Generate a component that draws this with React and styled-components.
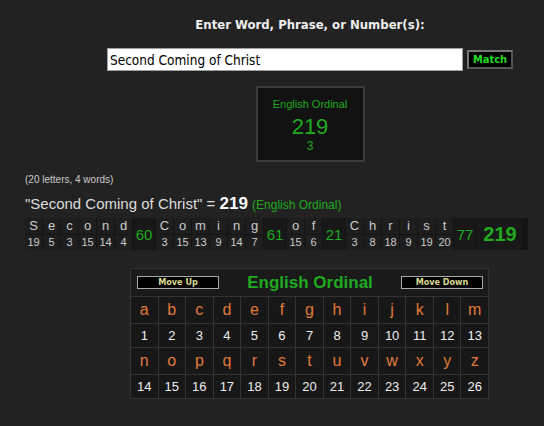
import React from 'react';
import styled, { createGlobalStyle } from 'styled-components';

const colors = {
  page: '#222222',
  green: '#1faa1f',
  bright: '#22dd22',
  orange: '#e07a3a',
  text: '#dddddd',
};

const GlobalStyle = createGlobalStyle`
  body {
    margin: 0;
    background: ${colors.page};
    font-family: "Liberation Sans", Arial, sans-serif;
  }
`;

const Page = styled.div`
  padding-top: 17px;
  width: 544px;
  height: 426px;
  overflow: hidden;
`;

const Centered = styled.div`
  margin-left: 76px;
  width: 468px;
  display: flex;
  flex-direction: column;
  align-items: center;
`;

const Heading = styled.div`
  font-family: "DejaVu Sans Condensed", "DejaVu Sans", sans-serif;
  font-weight: bold;
  font-size: 13px;
  line-height: 15px;
  color: #eeeeee;
`;

const InputRow = styled.div`
  display: flex;
  align-items: center;
  gap: 4px;
  margin-top: 16px;
`;

const TextInput = styled.input`
  box-sizing: border-box;
  width: 356px;
  height: 23px;
  border: 1px solid #a0a0a0;
  background: #ffffff;
  padding: 0 2px;
  font-family: "DejaVu Sans Condensed", "DejaVu Sans", sans-serif;
  font-size: 13.5px;
  color: #000;
  outline: none;
`;

const MatchButton = styled.button`
  box-sizing: border-box;
  width: 46px;
  height: 19px;
  padding: 0;
  background: #000;
  border: 2px solid #555;
  border-top-color: #777;
  border-left-color: #777;
  color: ${colors.bright};
  font-family: "DejaVu Sans Condensed", "DejaVu Sans", sans-serif;
  font-weight: bold;
  font-size: 11px;
`;

const ResultBox = styled.div`
  box-sizing: border-box;
  margin-top: 15px;
  width: 109px;
  height: 76px;
  border: 2px solid #3c3c3c;
  background: #121212;
  color: ${colors.green};
  text-align: center;
  padding-top: 10px;
`;

const BoxLabel = styled.div`
  font-size: 11px;
  line-height: 13px;
`;

const BoxValue = styled.div`
  font-size: 22px;
  line-height: 26px;
  margin-top: 3px;
`;

const BoxCount = styled.div`
  font-size: 12px;
  line-height: 12px;
`;

const Results = styled.div`
  margin-left: 25px;
  margin-top: 12px;
`;

const Counts = styled.div`
  font-size: 10px;
  line-height: 12px;
  color: #cccccc;
`;

const Equation = styled.div`
  margin-top: 9px;
  font-size: 15px;
  line-height: 18px;
  color: ${colors.text};
  white-space: nowrap;
`;

const Total = styled.b`
  font-size: 17px;
  color: #ffffff;
`;

const CipherName = styled.span`
  font-size: 12px;
  color: ${colors.green};
`;

const Breakdown = styled.div`
  display: flex;
  gap: 1px;
  margin-top: 4px;
  width: 503px;
  height: 32px;
  background: #141414;
`;

const LetterCol = styled.div`
  display: flex;
  flex-direction: column;
  gap: 1px;
  width: 17px;
`;

const LetterCell = styled.div`
  flex: 1;
  background: #1e1e1e;
  color: #cccccc;
  text-align: center;
  font-size: ${({ $small }) => ($small ? '11px' : '13px')};
  line-height: 15px;
`;

const SumCell = styled.div`
  width: ${({ $big }) => ($big ? '46px' : '22px')};
  display: flex;
  align-items: center;
  justify-content: center;
  background: #181818;
  color: ${colors.green};
  font-size: ${({ $big }) => ($big ? '20px' : '15px')};
  font-weight: ${({ $big }) => ($big ? 'bold' : 'normal')};
`;

const Chart = styled.div`
  box-sizing: border-box;
  margin: 18px 0 0 130px;
  width: 359px;
  border: 1px solid #333;
  background: #1a1a1a;
`;

const ChartHeader = styled.div`
  display: flex;
  align-items: center;
  justify-content: space-between;
  height: 27px;
  padding: 0 5px 0 6px;
  border-bottom: 1px solid #333;
`;

const MoveButton = styled.button`
  box-sizing: border-box;
  width: 82px;
  height: 13px;
  padding: 0;
  background: #000;
  border: 1px solid #aaa;
  color: #d8d890;
  font-family: "DejaVu Sans Condensed", "DejaVu Sans", sans-serif;
  font-weight: bold;
  font-size: 9px;
  line-height: 11px;
`;

const ChartTitle = styled.div`
  color: ${colors.green};
  font-weight: bold;
  font-size: 17px;
`;

const Grid = styled.div`
  display: grid;
  grid-template-columns: repeat(13, 1fr);
  gap: 1px;
  background: #333;
`;

const GridCell = styled.div`
  height: ${({ $letter }) => ($letter ? '26px' : '23px')};
  display: flex;
  align-items: center;
  justify-content: center;
  background: #171717;
  color: ${({ $letter }) => ($letter ? colors.orange : '#eeeeee')};
  font-size: ${({ $letter }) => ($letter ? '16px' : '13px')};
`;

const phrase = 'Second Coming of Christ';
const words = phrase.split(' ');
const ord = (ch) => ch.toLowerCase().charCodeAt(0) - 96;
const alphabet = 'abcdefghijklmnopqrstuvwxyz'.split('');

const App = () => {
  const rows = [alphabet.slice(0, 13), alphabet.slice(13)];

  return (
    <Page>
      <GlobalStyle />
      <Centered>
        <Heading>Enter Word, Phrase, or Number(s):</Heading>
        <InputRow>
          <TextInput defaultValue={phrase} />
          <MatchButton>Match</MatchButton>
        </InputRow>
        <ResultBox>
          <BoxLabel>English Ordinal</BoxLabel>
          <BoxValue>219</BoxValue>
          <BoxCount>3</BoxCount>
        </ResultBox>
      </Centered>

      <Results>
        <Counts>(20 letters, 4 words)</Counts>
        <Equation>
          "Second Coming of Christ" = <Total>219</Total> <CipherName>(English Ordinal)</CipherName>
        </Equation>
        <Breakdown>
          {words.map((word) => (
            <React.Fragment key={word}>
              {word.split('').map((ch, i) => (
                <LetterCol key={i}>
                  <LetterCell>{ch}</LetterCell>
                  <LetterCell $small>{ord(ch)}</LetterCell>
                </LetterCol>
              ))}
              <SumCell>{word.split('').reduce((s, ch) => s + ord(ch), 0)}</SumCell>
            </React.Fragment>
          ))}
          <SumCell $big>219</SumCell>
        </Breakdown>
      </Results>

      <Chart>
        <ChartHeader>
          <MoveButton>Move Up</MoveButton>
          <ChartTitle>English Ordinal</ChartTitle>
          <MoveButton>Move Down</MoveButton>
        </ChartHeader>
        <Grid>
          {rows.map((row, r) => (
            <React.Fragment key={r}>
              {row.map((ch) => (
                <GridCell key={ch} $letter>{ch}</GridCell>
              ))}
              {row.map((ch) => (
                <GridCell key={ch + 'n'}>{ord(ch)}</GridCell>
              ))}
            </React.Fragment>
          ))}
        </Grid>
      </Chart>
    </Page>
  );
};

export default App;
